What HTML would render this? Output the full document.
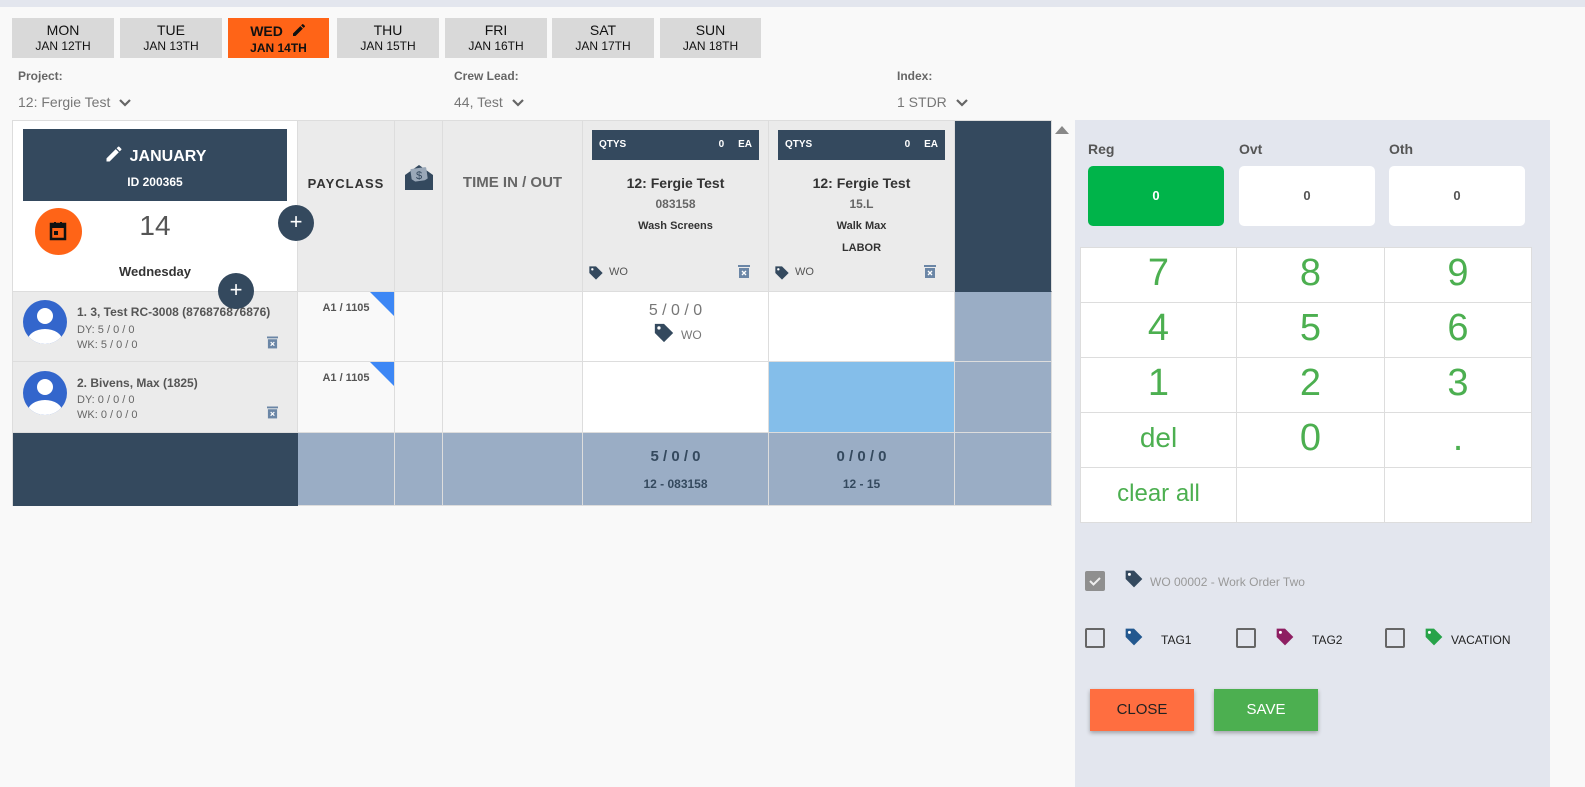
<!DOCTYPE html>
<html><head><meta charset="utf-8"><style>
*{box-sizing:border-box;margin:0;padding:0}
body{width:1585px;height:787px;overflow:hidden;background:#f9f9f9;font-family:"Liberation Sans",Arial,sans-serif;position:relative;color:#333}
.abs{position:absolute}
.topbar{left:0;top:0;width:1585px;height:7px;background:#e3e6ee}
.day{position:absolute;top:18px;width:102px;height:40px;background:#d9d9d9;text-align:center;color:#111;font-size:14px;line-height:16px;padding-top:4px}
.day small{display:block;font-size:12px;line-height:16px}
.lbl{font-size:12px;font-weight:bold;color:#666;position:absolute;top:69px}
.sel{font-size:14px;color:#777;position:absolute;top:94px}
.sel svg{vertical-align:middle;margin-left:8px}
.cell{position:absolute;border-right:1px solid #ddd;border-bottom:1px solid #ddd}
.hd{background:#ebebeb}
.qty{position:absolute;left:9px;right:9px;top:9px;height:30px;background:#34495e;color:#fff;font-size:10px;font-weight:bold;line-height:30px;padding:0 7px}
.ctr{text-align:center;position:absolute;left:0;right:0}
.plus{position:absolute;width:36px;height:36px;border-radius:50%;background:#34495e;color:#fff;font-size:22px;text-align:center;line-height:34px}
.av{position:absolute;left:10px;width:44px;height:44px;border-radius:50%;background:#3366cc;overflow:hidden}
.pad{position:absolute;left:1080px;top:247px;display:grid;grid-template-columns:156px 148px 147px;grid-template-rows:repeat(5,55px);border-left:1px solid #ddd;border-top:1px solid #ddd;background:#fff}
.pad div{border-right:1px solid #ddd;border-bottom:1px solid #ddd;color:#4caf50;font-size:38px;text-align:center;line-height:50px}
.cb{position:absolute;width:20px;height:20px;border:2px solid #666;border-radius:2px}
.tg{position:absolute;font-size:12px;color:#222}
</style></head><body>
<div class="abs topbar"></div>
<div class="day" style="left:12px">MON<small>JAN 12TH</small></div>
<div class="day" style="left:120px">TUE<small>JAN 13TH</small></div>
<div class="day" style="left:228px;background:#ff6417;font-weight:bold;width:101px">WED <svg width="16" height="16" viewBox="0 0 24 24" style="vertical-align:-2px;margin-left:4px"><path d="M3 17.25V21h3.75L17.8 9.94l-3.75-3.75L3 17.25zM20.7 7.04a1 1 0 000-1.41l-2.34-2.34a1 1 0 00-1.41 0l-1.83 1.830 3.75 3.75 1.83-1.83z" fill="#111"/></svg><small style="font-weight:bold;margin-top:1px">JAN 14TH</small></div>
<div class="day" style="left:337px">THU<small>JAN 15TH</small></div>
<div class="day" style="left:445px">FRI<small>JAN 16TH</small></div>
<div class="day" style="left:552px">SAT<small>JAN 17TH</small></div>
<div class="day" style="left:660px;width:101px">SUN<small>JAN 18TH</small></div>

<div class="lbl" style="left:18px">Project:</div>
<div class="sel" style="left:18px">12: Fergie Test<svg width="14" height="10" viewBox="0 0 14 10"><path d="M2 2l5 5 5-5" stroke="#666" stroke-width="2.2" fill="none"/></svg></div>
<div class="lbl" style="left:454px">Crew Lead:</div>
<div class="sel" style="left:454px">44, Test<svg width="14" height="10" viewBox="0 0 14 10"><path d="M2 2l5 5 5-5" stroke="#666" stroke-width="2.2" fill="none"/></svg></div>
<div class="lbl" style="left:897px">Index:</div>
<div class="sel" style="left:897px">1 STDR<svg width="14" height="10" viewBox="0 0 14 10"><path d="M2 2l5 5 5-5" stroke="#666" stroke-width="2.2" fill="none"/></svg></div>

<div class="abs" style="left:12px;top:120px;width:1040px;height:386px;border:1px solid #ddd;border-right:none;border-bottom:none"></div>
<div class="cell" style="left:13px;top:121px;width:285px;height:171px;background:#fff"></div>
<div class="abs" style="left:23px;top:129px;width:264px;height:72px;background:#34495e;color:#fff;text-align:center;font-weight:bold">
 <div style="font-size:16px;margin-top:15px"><svg width="20" height="20" viewBox="0 0 24 24" style="vertical-align:-3px;margin-right:6px"><path d="M3 17.25V21h3.75L17.8 9.94l-3.75-3.75L3 17.25zM20.7 7.04a1 1 0 000-1.41l-2.34-2.34a1 1 0 00-1.41 0l-1.83 1.83 3.75 3.75 1.83-1.83z" fill="#fff"/></svg>JANUARY</div>
 <div style="font-size:12px;margin-top:9px">ID 200365</div></div>
<div class="abs" style="left:35px;top:208px;width:47px;height:47px;border-radius:50%;background:#ff6417"><svg width="24" height="24" viewBox="0 0 24 24" style="margin:11px"><path d="M5 5h14v15H5z" fill="none" stroke="#111" stroke-width="2.5"/><rect x="5" y="5" width="14" height="4" fill="#111"/><rect x="8" y="3" width="2" height="4" fill="#111"/><rect x="14" y="3" width="2" height="4" fill="#111"/><rect x="8" y="12" width="4" height="4" fill="#111"/></svg></div>
<div class="abs" style="left:125px;top:210px;width:60px;text-align:center;font-size:28px;color:#555">14</div>
<div class="abs" style="left:80px;top:264px;width:150px;text-align:center;font-size:13px;font-weight:bold;color:#333">Wednesday</div>

<div class="cell hd" style="left:298px;top:121px;width:97px;height:171px"><div class="ctr" style="top:55px;font-size:13px;font-weight:bold;color:#333;letter-spacing:1px">PAYCLASS</div></div>
<div class="cell hd" style="left:395px;top:121px;width:48px;height:171px"><svg class="abs" style="left:8px;top:40px" width="32" height="32" viewBox="0 0 32 32"><path d="M2 14l14-10 14 10v15H2z" fill="#34495e"/><rect x="8" y="7" width="16" height="13" rx="1" fill="#9aa8b8" transform="rotate(-8 16 13)"/><text x="16" y="18" font-size="11" text-anchor="middle" fill="#34495e" font-family="Liberation Sans">$</text><path d="M2 14l14 9 14-9v15H2z" fill="#34495e"/></svg></div>
<div class="cell hd" style="left:443px;top:121px;width:140px;height:171px"><div class="ctr" style="top:53px;font-size:15px;font-weight:bold;color:#666">TIME IN / OUT</div></div>

<div class="cell hd" style="left:583px;top:121px;width:186px;height:171px">
 <div class="qty">QTYS<span style="float:right">0&nbsp;&nbsp;&nbsp;&nbsp; EA</span></div>
 <div class="ctr" style="top:54px;font-size:14px;font-weight:bold;color:#333">12: Fergie Test</div>
 <div class="ctr" style="top:76px;font-size:12px;font-weight:bold;color:#666">083158</div>
 <div class="ctr" style="top:99px;font-size:11px;font-weight:bold;color:#333">Wash Screens</div>
 <svg class="abs" style="left:5px;top:144px" width="16" height="16" viewBox="0 0 24 24"><path d="M2 2h10l10 10-10 10L2 12z" fill="#34495e"/><circle cx="6.5" cy="6.5" r="1.8" fill="#fff"/></svg>
 <span class="abs" style="left:26px;top:145px;font-size:11px;color:#555">WO</span>
 <svg class="abs" style="left:155px;top:143px" width="12" height="14" viewBox="0 0 12 14"><rect x="1" y="4" width="10" height="10" fill="#6b86a6"/><rect x="0" y="1" width="12" height="2" fill="#6b86a6"/><path d="M4 7l4 4M8 7l-4 4" stroke="#fff" stroke-width="1.3"/></svg>
</div>
<div class="cell hd" style="left:769px;top:121px;width:186px;height:171px">
 <div class="qty">QTYS<span style="float:right">0&nbsp;&nbsp;&nbsp;&nbsp; EA</span></div>
 <div class="ctr" style="top:54px;font-size:14px;font-weight:bold;color:#333">12: Fergie Test</div>
 <div class="ctr" style="top:76px;font-size:12px;font-weight:bold;color:#666">15.L</div>
 <div class="ctr" style="top:99px;font-size:11px;font-weight:bold;color:#333">Walk Max</div>
 <div class="ctr" style="top:121px;font-size:11px;font-weight:bold;color:#333">LABOR</div>
 <svg class="abs" style="left:5px;top:144px" width="16" height="16" viewBox="0 0 24 24"><path d="M2 2h10l10 10-10 10L2 12z" fill="#34495e"/><circle cx="6.5" cy="6.5" r="1.8" fill="#fff"/></svg>
 <span class="abs" style="left:26px;top:145px;font-size:11px;color:#555">WO</span>
 <svg class="abs" style="left:155px;top:143px" width="12" height="14" viewBox="0 0 12 14"><rect x="1" y="4" width="10" height="10" fill="#6b86a6"/><rect x="0" y="1" width="12" height="2" fill="#6b86a6"/><path d="M4 7l4 4M8 7l-4 4" stroke="#fff" stroke-width="1.3"/></svg>
</div>
<div class="cell" style="left:955px;top:121px;width:97px;height:171px;background:#34495e;border-bottom-color:#34495e"></div>

<div class="cell" style="left:13px;top:292px;width:285px;height:70px;background:#ebebeb">
 <div class="av" style="top:8px"><svg width="44" height="44" viewBox="0 0 44 44"><circle cx="22" cy="16" r="8" fill="#fff"/><ellipse cx="22" cy="40" rx="17" ry="11" fill="#fff"/></svg></div>
 <div class="abs" style="left:64px;top:13px;font-size:12px;font-weight:bold;color:#555">1. 3, Test RC-3008 (876876876876)</div>
 <div class="abs" style="left:64px;top:31px;font-size:11px;color:#666;line-height:15px">DY: 5 / 0 / 0<br>WK: 5 / 0 / 0</div>
 <svg class="abs" style="left:254px;top:43px" width="11" height="14" viewBox="0 0 12 14"><rect x="1" y="4" width="10" height="10" fill="#6b86a6"/><rect x="0" y="1" width="12" height="2" fill="#6b86a6"/><path d="M4 7l4 4M8 7l-4 4" stroke="#fff" stroke-width="1.3"/></svg>
</div>
<div class="cell" style="left:13px;top:362px;width:285px;height:71px;background:#ebebeb">
 <div class="av" style="top:9px"><svg width="44" height="44" viewBox="0 0 44 44"><circle cx="22" cy="16" r="8" fill="#fff"/><ellipse cx="22" cy="40" rx="17" ry="11" fill="#fff"/></svg></div>
 <div class="abs" style="left:64px;top:14px;font-size:12px;font-weight:bold;color:#555">2. Bivens, Max (1825)</div>
 <div class="abs" style="left:64px;top:31px;font-size:11px;color:#666;line-height:15px">DY: 0 / 0 / 0<br>WK: 0 / 0 / 0</div>
 <svg class="abs" style="left:254px;top:43px" width="11" height="14" viewBox="0 0 12 14"><rect x="1" y="4" width="10" height="10" fill="#6b86a6"/><rect x="0" y="1" width="12" height="2" fill="#6b86a6"/><path d="M4 7l4 4M8 7l-4 4" stroke="#fff" stroke-width="1.3"/></svg>
</div>
<div class="cell" style="left:298px;top:292px;width:97px;height:70px;background:#f9f9f9"><div class="ctr" style="top:10px;font-size:11px;font-weight:bold;color:#555">A1 / 1105</div><svg class="abs" style="right:0;top:0" width="24" height="24"><path d="M0 0h24v24z" fill="#3d87f5"/></svg></div>
<div class="cell" style="left:298px;top:362px;width:97px;height:71px;background:#f9f9f9"><div class="ctr" style="top:10px;font-size:11px;font-weight:bold;color:#555">A1 / 1105</div><svg class="abs" style="right:0;top:0" width="24" height="24"><path d="M0 0h24v24z" fill="#3d87f5"/></svg></div>
<div class="cell" style="left:395px;top:292px;width:48px;height:70px;background:#f9f9f9"></div>
<div class="cell" style="left:395px;top:362px;width:48px;height:71px;background:#f9f9f9"></div>
<div class="cell" style="left:443px;top:292px;width:140px;height:70px;background:#f9f9f9"></div>
<div class="cell" style="left:443px;top:362px;width:140px;height:71px;background:#f9f9f9"></div>
<div class="cell" style="left:583px;top:292px;width:186px;height:70px;background:#fff">
 <div class="ctr" style="top:10px;font-size:16px;color:#777">5 / 0 / 0</div>
 <svg class="abs" style="left:70px;top:30px" width="22" height="22" viewBox="0 0 24 24"><path d="M2 2h10l10 10-10 10L2 12z" fill="#34495e"/><circle cx="6.5" cy="6.5" r="1.8" fill="#fff"/></svg>
 <span class="abs" style="left:98px;top:36px;font-size:12px;color:#777">WO</span>
</div>
<div class="cell" style="left:583px;top:362px;width:186px;height:71px;background:#fff"></div>
<div class="cell" style="left:769px;top:292px;width:186px;height:70px;background:#fff"></div>
<div class="cell" style="left:769px;top:362px;width:186px;height:71px;background:#84beea"></div>
<div class="cell" style="left:955px;top:292px;width:97px;height:70px;background:#9aadc5"></div>
<div class="cell" style="left:955px;top:362px;width:97px;height:71px;background:#9aadc5"></div>
<div class="cell" style="left:13px;top:433px;width:285px;height:73px;background:#34495e;border-color:#34495e"></div>
<div class="cell" style="left:298px;top:433px;width:97px;height:73px;background:#9aadc5"></div>
<div class="cell" style="left:395px;top:433px;width:48px;height:73px;background:#9aadc5"></div>
<div class="cell" style="left:443px;top:433px;width:140px;height:73px;background:#9aadc5"></div>
<div class="cell" style="left:583px;top:433px;width:186px;height:73px;background:#9aadc5"><div class="ctr" style="top:15px;font-size:15px;font-weight:bold;color:#34495e">5 / 0 / 0</div><div class="ctr" style="top:44px;font-size:12px;font-weight:bold;color:#34495e">12 - 083158</div></div>
<div class="cell" style="left:769px;top:433px;width:186px;height:73px;background:#9aadc5"><div class="ctr" style="top:15px;font-size:15px;font-weight:bold;color:#34495e">0 / 0 / 0</div><div class="ctr" style="top:44px;font-size:12px;font-weight:bold;color:#34495e">12 - 15</div></div>
<div class="cell" style="left:955px;top:433px;width:97px;height:73px;background:#9aadc5"></div>

<div class="plus" style="left:278px;top:205px">+</div>
<div class="plus" style="left:218px;top:273px">+</div>
<svg class="abs" style="left:1055px;top:124px" width="14" height="10"><path d="M0 10L7 2l7 8z" fill="#888"/></svg>

<div class="abs" style="left:1075px;top:120px;width:475px;height:667px;background:#e3e6ee"></div>
<div class="abs" style="left:1088px;top:141px;font-size:14px;font-weight:bold;color:#555">Reg</div>
<div class="abs" style="left:1239px;top:141px;font-size:14px;font-weight:bold;color:#555">Ovt</div>
<div class="abs" style="left:1389px;top:141px;font-size:14px;font-weight:bold;color:#555">Oth</div>
<div class="abs" style="left:1088px;top:166px;width:136px;height:60px;border-radius:5px;background:#00b44a;color:#fff;font-weight:bold;font-size:13px;text-align:center;line-height:60px">0</div>
<div class="abs" style="left:1239px;top:166px;width:136px;height:60px;border-radius:5px;background:#fff;color:#555;font-weight:bold;font-size:13px;text-align:center;line-height:60px">0</div>
<div class="abs" style="left:1389px;top:166px;width:136px;height:60px;border-radius:5px;background:#fff;color:#555;font-weight:bold;font-size:13px;text-align:center;line-height:60px">0</div>
<div class="pad">
<div>7</div><div>8</div><div>9</div>
<div>4</div><div>5</div><div>6</div>
<div>1</div><div>2</div><div>3</div>
<div style="font-size:28px">del</div><div>0</div><div>.</div>
<div style="font-size:24px;line-height:52px">clear all</div><div></div><div></div>
</div>

<div class="abs" style="left:1085px;top:571px;width:20px;height:20px;border-radius:2px;background:#8f8f8f"><svg width="20" height="20"><path d="M5 10l3.5 3.5L15 7" stroke="#eee" stroke-width="2" fill="none"/></svg></div>
<svg class="abs" style="left:1124px;top:569px" width="20" height="20" viewBox="0 0 24 24"><path d="M2 2h10l10 10-10 10L2 12z" fill="#34495e"/><circle cx="6.5" cy="6.5" r="1.8" fill="#fff"/></svg>
<div class="tg" style="left:1150px;top:575px;color:#999;font-size:12px">WO 00002 - Work Order Two</div>

<div class="cb" style="left:1085px;top:628px"></div>
<svg class="abs" style="left:1124px;top:627px" width="20" height="20" viewBox="0 0 24 24"><path d="M2 2h10l10 10-10 10L2 12z" fill="#23588f"/><circle cx="6.5" cy="6.5" r="1.8" fill="#fff"/></svg>
<div class="tg" style="left:1161px;top:633px">TAG1</div>
<div class="cb" style="left:1236px;top:628px"></div>
<svg class="abs" style="left:1275px;top:627px" width="20" height="20" viewBox="0 0 24 24"><path d="M2 2h10l10 10-10 10L2 12z" fill="#8e1f62"/><circle cx="6.5" cy="6.5" r="1.8" fill="#fff"/></svg>
<div class="tg" style="left:1312px;top:633px">TAG2</div>
<div class="cb" style="left:1385px;top:628px"></div>
<svg class="abs" style="left:1424px;top:627px" width="20" height="20" viewBox="0 0 24 24"><path d="M2 2h10l10 10-10 10L2 12z" fill="#27a349"/><circle cx="6.5" cy="6.5" r="1.8" fill="#fff"/></svg>
<div class="tg" style="left:1451px;top:633px">VACATION</div>

<div class="abs" style="left:1090px;top:689px;width:104px;height:42px;background:#ff6e40;color:#222;font-size:15px;text-align:center;line-height:42px;box-shadow:0 2px 4px rgba(0,0,0,.3)">CLOSE</div>
<div class="abs" style="left:1214px;top:689px;width:104px;height:42px;background:#4caf50;color:#fff;font-size:15px;text-align:center;line-height:42px;box-shadow:0 2px 4px rgba(0,0,0,.3)">SAVE</div>
</body></html>
